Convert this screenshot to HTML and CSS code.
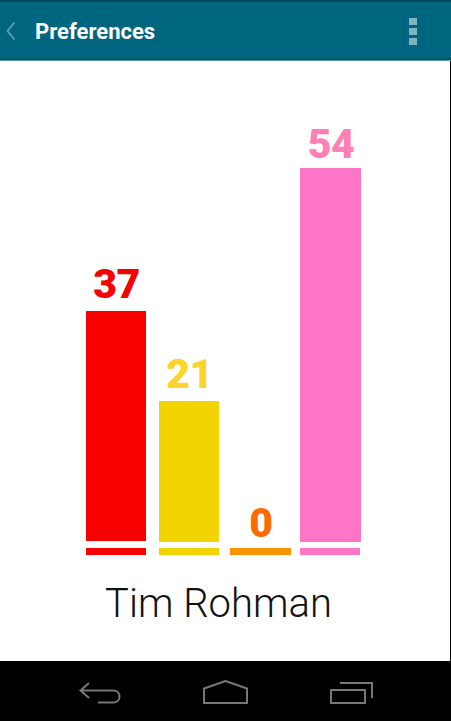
FILE: index.html
```html
<!DOCTYPE html>
<html lang="en">

<head>
    <meta charset="UTF-8">
    <title>Preferences</title>
    <link rel="stylesheet" href="styles.css">
</head>

<body>
    <div class="screen">
        <div class="actionbar">
            <svg class="back" width="10" height="18" viewBox="0 0 10 18">
                <path d="M8.500 .5 1.500 9l7 8.500" fill="none" stroke="#5fa0b2" stroke-width="1.800" />
            </svg>
            <span class="title">Preferences</span>
            <div class="overflow">
                <span></span>
                <span></span>
                <span></span>
            </div>
        </div>
        <div class="content">
            <div class="chart">
                <div class="col red">
                    <span class="num">37</span>
                    <div class="bar bar37"></div>
                    <div class="base"></div>
                </div>
                <div class="col yellow">
                    <span class="num">21</span>
                    <div class="bar bar21"></div>
                    <div class="base"></div>
                </div>
                <div class="col orange">
                    <span class="num">0</span>
                    <div class="bar bar0"></div>
                    <div class="base"></div>
                </div>
                <div class="col pink">
                    <span class="num">54</span>
                    <div class="bar bar54"></div>
                    <div class="base"></div>
                </div>
            </div>
            <div class="name">Tim Rohman</div>
        </div>
        <div class="navbar">
            <svg width="42" height="22" viewBox="0 0 42 22">
                <path d="M10 1 1.500 8.500 10 16M1.500 8.500H34c4 0 6.500 2.500 6.500 6s-2.500 6-6.500 6H19" fill="none" stroke="#777" stroke-width="2" />
            </svg>
            <svg width="45" height="24" viewBox="0 0 45 24">
                <path d="M1 23V8.500L22.500 1 44 8.500V23z" fill="none" stroke="#777" stroke-width="2" />
            </svg>
            <svg width="43" height="22" viewBox="0 0 43 22">
                <path d="M1 8h34v13H1zM10 1h32v15" fill="none" stroke="#777" stroke-width="2" />
            </svg>
        </div>
    </div>
</body>

</html>
```

FILE: styles.css
```css
html, body {
    margin: 0;
    background-color: #fff;
}

.screen {
    width: 451px;
    height: 721px;
    display: flex;
    flex-direction: column;
    font-family: Roboto, "Liberation Sans", sans-serif;
}

.actionbar {
    height: 61px;
    box-sizing: border-box;
    display: flex;
    align-items: center;
    background-color: #00657f;
    border-top: 2px solid #06475a;
    border-bottom: 1px solid #4d9db0;
    box-shadow: inset 0 -2px 0 #045468;
    padding-left: 6px;
}

.back {
    margin-right: 19px;
}

.title {
    color: white;
    font-size: 22px;
    font-weight: 700;
}

.overflow {
    margin-left: auto;
    margin-right: 34px;
    display: flex;
    flex-direction: column;
    gap: 3px;
}

.overflow span {
    width: 8px;
    height: 7px;
    background-color: #7fb3c0;
}

.content {
    flex: 1;
    border-right: 1px solid black;
    display: flex;
    flex-direction: column;
    align-items: flex-start;
    padding-left: 86px;
}

.chart {
    height: 494px;
    display: flex;
    align-items: flex-end;
}

.col {
    width: 60px;
    display: flex;
    flex-direction: column;
    align-items: center;
}

.yellow { margin-left: 13px; }
.orange { margin-left: 11px; width: 61px; }
.pink { margin-left: 9px; width: 61px; }

.num {
    font-size: 41px;
    font-weight: 900;
    line-height: 48px;
    letter-spacing: -.5px;
    padding-left: 1px;
}

.bar {
    width: 100%;
}

.bar37 { height: 230px; margin-top: 3px; margin-bottom: 7px; }
.bar21 { height: 141px; margin-top: 3px; margin-bottom: 6px; }
.bar0 { height: 0; margin-bottom: 1px; }
.bar54 { height: 374px; margin-bottom: 6px; }

.base {
    width: 100%;
    height: 7px;
}

.red .num { color: #f60000; }
.red .bar, .red .base { background-color: #f60000; }
.yellow .num { color: #ffd42a; }
.yellow .bar, .yellow .base { background-color: #f2d500; }
.orange .num { color: #ff6a00; }
.orange .base { background-color: #f79400; }
.pink .num { color: #ff80b5; }
.pink .bar, .pink .base { background-color: #ff75c8; }

.pink .base {
    width: 60px;
    align-self: flex-start;
}

.name {
    width: 265px;
    margin-top: 24px;
    text-align: center;
    font-size: 40px;
    font-weight: 300;
    line-height: 50px;
    white-space: nowrap;
    color: #111;
}

.navbar {
    height: 60px;
    box-sizing: border-box;
    background-color: black;
    display: flex;
    align-items: flex-end;
    padding: 0 0 17px 79px;
    gap: 82px;
}
```
